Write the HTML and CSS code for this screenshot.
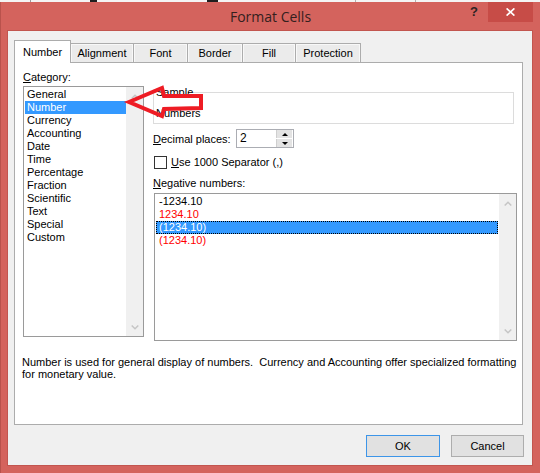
FILE: index.html
```html
<!DOCTYPE html>
<html>
<head>
<meta charset="utf-8">
<title>Format Cells</title>
<link rel="stylesheet" href="styles.css">
</head>
<body>
<div class="screen">
  <div class="strip"></div>
  <div class="window">
    <div class="titlebar">
      <div></div>
      <div class="title">Format Cells</div>
      <div class="controls">
        <div class="help">?</div>
        <div class="close">
          <svg width="9" height="8" viewBox="0 0 9 8"><path d="M0.6 0.4 L8.4 7.6 M8.4 0.4 L0.6 7.6" stroke="#fff" stroke-width="1.7" fill="none"/></svg>
        </div>
      </div>
    </div>
    <div class="client">
      <div class="tabs">
        <div class="tab sel w-number">Number</div>
        <div class="tab w-align">Alignment</div>
        <div class="tab w-font">Font</div>
        <div class="tab w-border">Border</div>
        <div class="tab w-fill">Fill</div>
        <div class="tab w-prot">Protection</div>
      </div>
      <div class="panel">
        <div class="cols">
          <div class="leftcol">
            <div class="lbl"><u>C</u>ategory:</div>
            <div class="listbox cat">
              <div class="items">
                <div class="item">General</div>
                <div class="item sel">Number</div>
                <div class="item">Currency</div>
                <div class="item">Accounting</div>
                <div class="item">Date</div>
                <div class="item">Time</div>
                <div class="item">Percentage</div>
                <div class="item">Fraction</div>
                <div class="item">Scientific</div>
                <div class="item">Text</div>
                <div class="item">Special</div>
                <div class="item">Custom</div>
              </div>
              <div class="scroll">
                <svg width="8" height="5" viewBox="0 0 8 5"><polyline points="0.7,4.5 4,1.2 7.3,4.5" stroke="#c6c6c6" stroke-width="1.5" fill="none"/></svg>
                <svg width="8" height="5" viewBox="0 0 8 5"><polyline points="0.7,0.5 4,3.8 7.3,0.5" stroke="#c6c6c6" stroke-width="1.5" fill="none"/></svg>
              </div>
            </div>
          </div>
          <div class="rightcol">
            <fieldset class="sample">
              <legend>Sample</legend>
              <div class="sample-val">Numbers</div>
            </fieldset>
            <div class="decrow">
              <div class="declbl"><u>D</u>ecimal places:</div>
              <div class="spin">
                <div class="spinval">2</div>
                <div class="spinbtns">
                  <div class="sb"><span class="tri-up"></span></div>
                  <div class="sb"><span class="tri-down"></span></div>
                </div>
              </div>
            </div>
            <div class="chkrow">
              <div class="chk"></div>
              <div class="chklbl"><u>U</u>se 1000 Separator (,)</div>
            </div>
            <div class="neglbl"><u>N</u>egative numbers:</div>
            <div class="listbox neg">
              <div class="items">
                <div class="item">-1234.10</div>
                <div class="item red">1234.10</div>
                <div class="item sel">(1234.10)</div>
                <div class="item red">(1234.10)</div>
              </div>
              <div class="scroll">
                <svg width="8" height="5" viewBox="0 0 8 5"><polyline points="0.7,4.5 4,1.2 7.3,4.5" stroke="#c6c6c6" stroke-width="1.5" fill="none"/></svg>
                <svg width="8" height="5" viewBox="0 0 8 5"><polyline points="0.7,0.5 4,3.8 7.3,0.5" stroke="#c6c6c6" stroke-width="1.5" fill="none"/></svg>
              </div>
            </div>
          </div>
        </div>
        <p class="desc">Number is used for general display of numbers.&nbsp; Currency and Accounting offer specialized formatting<br>for monetary value.</p>
      </div>
      <div class="buttons">
        <div class="btn ok">OK</div>
        <div class="btn cancel">Cancel</div>
      </div>
    </div>
  </div>
  <svg class="arrow" width="540" height="473" viewBox="0 0 540 473">
    <polygon points="129,102 162,88 164,96 201,96 201,108 164,109 162,116" fill="none" stroke="#ee1c24" stroke-width="4" stroke-linejoin="miter"/>
  </svg>
</div>
</body>
</html>
```

FILE: styles.css
```css
* { box-sizing: border-box; margin: 0; padding: 0; }
html, body { width: 540px; height: 473px; overflow: hidden; }
body {
  font-family: "Liberation Sans", Arial, sans-serif;
  font-size: 11px;
  color: #000;
  background: #d4635d;
}
.screen { position: relative; width: 540px; height: 473px; }
.strip {
  height: 2px;
  background: linear-gradient(to right,
    #f4f4f4 0, #f4f4f4 30px, #9a9a9a 30px, #9a9a9a 31px,
    #f4f4f4 31px, #f4f4f4 90px, #1e1e1e 90px, #1e1e1e 97px,
    #f4f4f4 97px, #f4f4f4 207px, #1e1e1e 207px, #1e1e1e 218px,
    #f4f4f4 218px, #f4f4f4 355px, #b0b0b0 355px, #b0b0b0 356px,
    #f4f4f4 356px, #f4f4f4 415px, #b0b0b0 415px, #b0b0b0 416px,
    #f4f4f4 416px);
}
.window {
  height: 471px;
  background: #d4635d;
  border-left: 1px solid #b9524c;
  display: flex;
  flex-direction: column;
}
.titlebar {
  height: 29px;
  display: grid;
  grid-template-columns: 1fr auto 1fr;
  align-items: start;
}
.title {
  font-family: "Open Sans", "Noto Sans", sans-serif;
  font-size: 14px;
  line-height: 29px;
  color: #33201e;
  text-align: center;
}
.controls {
  display: flex;
  justify-content: flex-end;
  padding-right: 7px;
}
.help {
  width: 20px;
  height: 20px;
  margin-right: 4px;
  font-family: "Liberation Sans", Arial, sans-serif;
  font-weight: bold;
  font-size: 13px;
  line-height: 20px;
  text-align: center;
  color: #2c2222;
}
.close {
  width: 45px;
  height: 20px;
  background: #c74c47;
  display: flex;
  align-items: center;
  justify-content: center;
}
.client {
  margin: 0 8px 0 7px;
  height: 434px;
  background: #f0f0f0;
  box-shadow: 0 0 0 1px #c2554f;
  display: flex;
  flex-direction: column;
}
.tabs {
  margin-top: 9px;
  padding-left: 6px;
  height: 22px;
  display: flex;
  align-items: flex-end;
  position: relative;
  z-index: 1;
}
.tab {
  height: 19px;
  border: 1px solid #acacac;
  border-bottom: none;
  margin-left: -1px;
  background: #ebebeb;
  box-shadow: inset 1px 1px 0 #f8f8f8, inset -1px 0 0 #f8f8f8;
  text-align: center;
  line-height: 17px;
  padding-top: 1px;
}
.tab.sel {
  height: 23px;
  margin-left: 0;
  margin-bottom: -1px;
  background: #fff;
  box-shadow: none;
  line-height: 22px;
  padding-top: 0;
}
.w-number { width: 57px; }
.w-align { width: 64px; }
.w-font { width: 55px; }
.w-border { width: 56px; }
.w-fill { width: 54px; }
.w-prot { width: 66px; }
.panel {
  margin-left: 6px;
  width: 509px;
  height: 363px;
  border: 1px solid #acacac;
  background: #fff;
  padding: 8px 5px 0 8px;
}
.cols { display: flex; gap: 9px; }
.leftcol { width: 121px; }
.lbl { line-height: 13px; height: 13px; }
.listbox {
  border: 1px solid #9a9a9a;
  background: #fff;
  display: flex;
}
.listbox.cat { margin-top: 2px; height: 251px; }
.items { flex: 1; padding-top: 1px; }
.item { line-height: 13px; height: 13px; white-space: nowrap; }
.cat .item { margin-left: 1px; padding-left: 2px; }
.cat .item.sel { background: #3399ff; color: #fff; }
.scroll {
  width: 17px;
  background: #f0f0f0;
  display: flex;
  flex-direction: column;
  justify-content: space-between;
  align-items: center;
  padding: 7px 0 6px;
}
.rightcol { width: 364px; margin-top: 15px; }
.sample {
  margin-right: 3px;
  border: 1px solid #dcdcdc;
  padding: 0 0 3px 2px;
}
.sample legend { line-height: 13px; padding: 0; }
.sample-val { margin-top: 8px; line-height: 13px; }
.decrow {
  margin-top: 5px;
  height: 19px;
  display: flex;
  align-items: flex-start;
}
.declbl { width: 83px; line-height: 13px; margin-top: 4px; }
.spin {
  width: 58px;
  height: 19px;
  border: 1px solid #abadb3;
  background: #fff;
  display: flex;
}
.spinval { flex: 1; padding-left: 3px; line-height: 17px; font-size: 12px; }
.spinbtns {
  width: 16px;
  margin: 0 1px 0 0;
  display: flex;
  flex-direction: column;
  gap: 1px;
}
.sb {
  flex: 1;
  background: #e3e3e3;
  border-left: 1px solid #cfcfcf;
  display: flex;
  align-items: center;
  justify-content: center;
}
.tri-up {
  width: 0; height: 0;
  border-left: 3px solid transparent;
  border-right: 3px solid transparent;
  border-bottom: 3px solid #000;
}
.tri-down {
  width: 0; height: 0;
  border-left: 3px solid transparent;
  border-right: 3px solid transparent;
  border-top: 3px solid #000;
}
.chkrow {
  margin-top: 8px;
  height: 13px;
  display: flex;
  align-items: center;
}
.chk {
  width: 13px;
  height: 13px;
  border: 1px solid #333;
  background: #fff;
  margin-left: 1px;
}
.chklbl { margin-left: 4px; line-height: 13px; }
.neglbl { margin-top: 8px; line-height: 13px; }
.listbox.neg { margin-top: 3px; margin-left: 1px; height: 148px; }
.neg .item { margin: 0 1px; padding-left: 3px; }
.neg .item.red { color: #ff0000; }
.neg .item.sel {
  background: #3399ff;
  color: #fff;
  outline: 1px dotted #000;
  outline-offset: -1px;
}
.desc {
  margin-top: 15px;
  margin-left: -1px;
  line-height: 12px;
  white-space: nowrap;
}
.buttons {
  margin-top: 10px;
  padding-right: 8px;
  display: flex;
  justify-content: flex-end;
  gap: 11px;
}
.btn {
  height: 22px;
  line-height: 20px;
  text-align: center;
  background: #e1e1e1;
  border: 1px solid #adadad;
}
.btn.ok { width: 74px; border-color: #3d95e8; }
.btn.cancel { width: 73px; }
.arrow { position: absolute; left: 0; top: 0; pointer-events: none; }
```
